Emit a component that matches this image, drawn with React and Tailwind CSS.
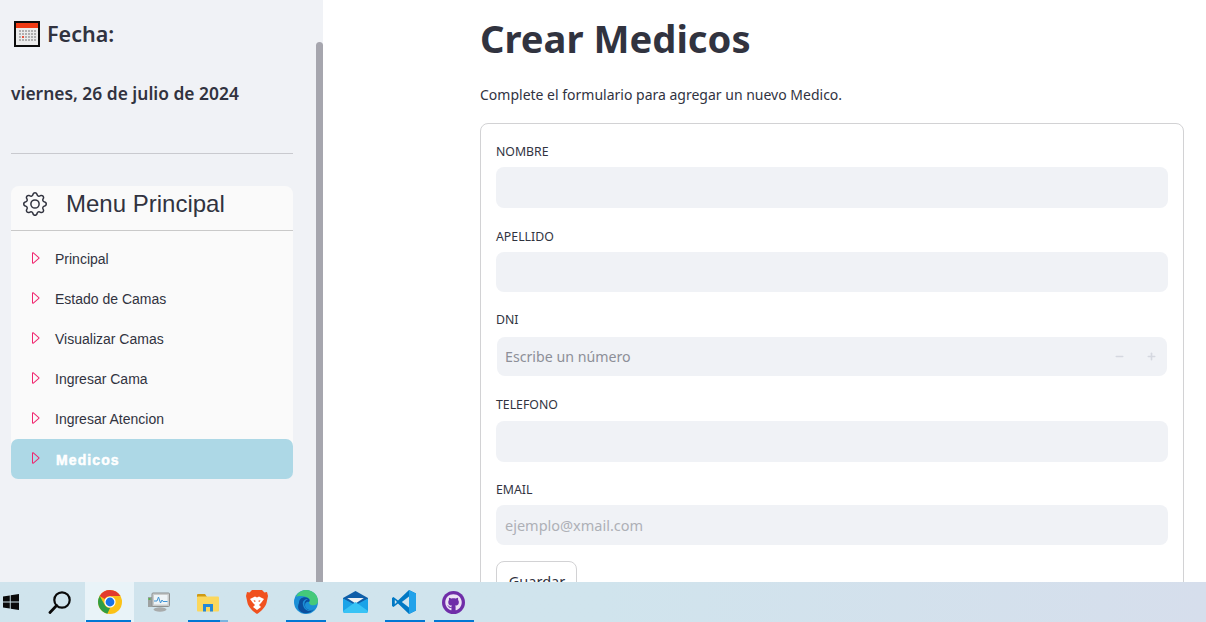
import { BsGear, BsCaretRight } from 'react-icons/bs';
import { FaGithub } from 'react-icons/fa';
import { Minus, Plus } from 'lucide-react';

const menuItems = ['Principal', 'Estado de Camas', 'Visualizar Camas', 'Ingresar Cama', 'Ingresar Atencion'];

const CalendarIcon = () => (
  <svg width="26" height="26" viewBox="0 0 26 26" className="shrink-0">
    <rect x="1" y="1" width="24" height="24" fill="#fff" stroke="#0c0c0c" strokeWidth="2" />
    <rect x="2" y="2" width="22" height="5" fill="#f03a14" />
    <rect x="2" y="7" width="22" height="17" fill="#ececec" />
    {[9, 12, 15, 18].map((y) => [6, 9, 12, 15, 18, 21].map((x) => (
      <rect key={`${x}-${y}`} x={x - 1} y={y} width="2" height="2" fill={x === 9 && y === 15 ? '#e8553f' : '#b0b0b0'} />
    )))}
  </svg>
);

const WindowsIcon = () => (
  <svg width="16" height="16" viewBox="0 0 16 16" fill="#0a0a0a">
    <path d="M0 2.4 6.8 1.4V7.6H0ZM7.7 1.3 16 0V7.6H7.7ZM0 8.4H6.8V14.6L0 13.6ZM7.7 8.4H16V16L7.7 14.7Z" />
  </svg>
);

const SearchIcon = () => (
  <svg width="24" height="24" viewBox="0 0 24 24" fill="none" stroke="#0a0a0a">
    <circle cx="14" cy="10" r="7.7" strokeWidth="2.2" />
    <path d="M8.6 15.6 2 22.4" strokeWidth="2.8" strokeLinecap="round" />
  </svg>
);

const ChromeIcon = () => (
  <svg width="24" height="24" viewBox="0 0 24 24" className="ml-[2px]">
    <circle cx="12" cy="12" r="12" fill="#fbc116" />
    <path d="M12 0A12 12 0 0 1 22.4 6H12A6 6 0 0 0 6.8 9L1.7 5.9A12 12 0 0 1 12 0Z" fill="#e33b2e" />
    <path d="M1.7 5.9 6.8 15A6 6 0 0 0 12 18L9.4 23.7A12 12 0 0 1 1.7 5.9Z" fill="#2f9e44" />
    <circle cx="12" cy="12" r="5.6" fill="#fff" />
    <circle cx="12" cy="12" r="4.4" fill="#1a73e8" />
  </svg>
);

const MonitorIcon = () => (
  <svg width="22" height="20" viewBox="0 0 22 20">
    <rect x="0" y="5" width="7" height="10" fill="#9da1a1" />
    <rect x="0.500" y="6" width="2" height="2" fill="#5bb04d" />
    <rect x="4" y="1" width="17.500" height="13.500" rx="1" fill="#c9cccc" stroke="#8d9191" />
    <rect x="6" y="3" width="13.500" height="9.500" fill="#eef4f7" />
    <path d="M6 9h3l1.500-4 2 6 1.500-3 1 1.500h4.500" fill="none" stroke="#3f94d6" />
    <ellipse cx="12" cy="17.500" rx="6.500" ry="2.200" fill="#a8abab" />
  </svg>
);

const FolderIcon = () => (
  <svg width="22" height="19" viewBox="0 0 22 19">
    <path d="M0 2a1 1 0 0 1 1-1h7l2 3H0Z" fill="#cf9a14" />
    <rect x="0" y="3.500" width="22" height="15" rx="1" fill="#fbd75c" />
    <path d="M6 18.500V11h10v7.500h-3V14H9v4.500Z" fill="#2488d8" />
  </svg>
);

const BraveIcon = () => (
  <svg width="22" height="24" viewBox="0 0 22 24">
    <path d="M6 0H16L18.500 2.500 21 2 22 6 20.500 13C19.500 17 15 21.500 11 24 7 21.500 2.500 17 1.500 13L0 6 1 2 3.500 2.500Z" fill="#f0511f" />
    <path d="M6 8 9 6.500 11 7.500 13 6.500 16 8 18 9 15 13 13 15 15 17 11 20 7 17 9 15 7 13 4 9Z" fill="#fff" />
    <path d="M7.500 10 10 11 8.500 12ZM14.500 10 12 11 13.500 12Z" fill="#f0511f" />
  </svg>
);

const EdgeIcon = () => (
  <svg width="24" height="24" viewBox="0 0 24 24">
    <circle cx="12" cy="12" r="12" fill="#1b8fd6" />
    <path d="M2 7C4 2 8 0 12 0 19 0 24 5 24 11 24 15 20 16 17 15 14.500 14 15 11 16 10 14 6 5 5 2 7Z" fill="#44c97a" />
    <path d="M5 13C5 8 10 6 14 8 16 9.500 16 11 15 12 12 11 10 14 11.500 17.500 13 20 17 21 20 19.500 16 24 9 25 5 20 3.500 18 4 15 5 13Z" fill="#0b4f9e" />
    <path d="M9 15C8 11 11 8.500 14 9 11.500 10 10 12 10.500 15 11 19 15 22 20 19.500 15 23 10 20 9 15Z" fill="#1b8fd6" />
  </svg>
);

const MailIcon = () => (
  <svg width="25" height="22" viewBox="0 0 24 22" preserveAspectRatio="none">
    <path d="M0 7 12 0 24 7V8L12 15 0 8Z" fill="#0f5ea8" />
    <path d="M4 7H20L12 12.500Z" fill="#f2f2f2" />
    <path d="M0 7.500 12 14 24 7.500V20A2 2 0 0 1 22 22H2A2 2 0 0 1 0 20Z" fill="#1aa3e8" />
    <path d="M0 20 12 11 24 20V20A2 2 0 0 1 22 22H2A2 2 0 0 1 0 20Z" fill="#38c3f5" />
  </svg>
);

const VsCodeIcon = () => (
  <svg width="24" height="24" viewBox="0 0 24 24" className="-ml-[2px]">
    <path d="M17 0 24 3.500V20.500L17 24 6 13.500 1.500 17 0 16V8L1.500 7 6 10.500Z" fill="#0078c4" />
    <path d="M17 0 24 3.500V20.500L17 24Z" fill="#22a2ea" />
    <path d="M17 6.500 9.800 12 17 17.500Z" fill="#d0e4ed" />
    <path d="M2.800 9.800 5 12 2.800 14.200Z" fill="#d0e4ed" />
  </svg>
);

const GithubIcon = () => (
  <span className="flex h-[23px] w-[23px] items-center justify-center rounded-full bg-[#6f2da8]">
    <FaGithub className="text-[#ece2f5]" size={17} />
  </span>
);

const taskbarItems = [
  { id: 'windows', icon: <WindowsIcon /> },
  { id: 'search', icon: <SearchIcon /> },
  { id: 'chrome', icon: <ChromeIcon />, active: true },
  { id: 'monitor', icon: <MonitorIcon /> },
  { id: 'folder', icon: <FolderIcon />, underline: 'folder' },
  { id: 'brave', icon: <BraveIcon /> },
  { id: 'edge', icon: <EdgeIcon />, underline: 'app' },
  { id: 'mail', icon: <MailIcon /> },
  { id: 'vscode', icon: <VsCodeIcon />, underline: 'app' },
  { id: 'github', icon: <GithubIcon />, underline: 'app' }
];

const Field = ({ label, placeholder, className = '', labelClass = 'h-[25px]' }) => (
  <div className={className}>
    <label className={`block text-[12.300px] leading-[20px] text-[#31333f] ${labelClass}`}>{label}</label>
    <input
      placeholder={placeholder}
      className="block h-[40.500px] w-full rounded-lg bg-[#f0f2f6] px-[9px] text-[14.500px] text-[#31333f] outline-none placeholder:text-[#aeb0b6]"
    />
  </div>
);

export default function App() {
  return (
    <div className="flex h-[622px] w-[1206px] flex-col overflow-hidden bg-white font-['Noto_Sans',sans-serif] text-[#31333f]">
      <div className="flex h-[582px] min-h-0">
        <aside className="relative flex w-[323px] shrink-0 flex-col bg-[#f0f2f6] pl-[11px] pr-[30px]">
          <div className="mt-[21px] flex h-[26px] items-center gap-[7px] pl-[3px]">
            <CalendarIcon />
            <span className="text-[21.500px] font-semibold leading-[26px]">Fecha:</span>
          </div>
          <p className="mt-[31px] text-[17.400px] font-semibold leading-[30px]">viernes, 26 de julio de 2024</p>
          <hr className="mt-[45px] border-t border-[#c9cacf]" />
          <nav className="mt-[32px] rounded-lg bg-[#fafafa] font-['Liberation_Sans',sans-serif]">
            <div className="flex h-[45px] items-center gap-[19px] border-b border-[#c9c9c9] pb-[8px] pl-[12px]">
              <BsGear size={24} />
              <span className="text-[24px] leading-[30px]">Menu Principal</span>
            </div>
            <ul className="mt-[8px]">
              {menuItems.map((item) => (
                <li key={item} className="flex h-[40px] items-center pl-[16px] text-[14px]">
                  <BsCaretRight size={16} className="-mt-[2px] text-[#f0256e]" />
                  <span className="ml-[12px]">{item}</span>
                </li>
              ))}
              <li className="flex h-[40px] items-center rounded-[7px] bg-[#add8e6] pl-[16px] text-[14px] font-bold text-white">
                <BsCaretRight size={16} className="-mt-[2px] text-[#f0256e]" />
                <span className="ml-[13px] pt-[2px] tracking-[1.100px] [-webkit-text-stroke:0.5px_white]">Medicos</span>
              </li>
            </ul>
          </nav>
          <div className="absolute bottom-0 right-0 top-[42px] w-[7px] rounded-t-full bg-[#a6a6ae]" />
        </aside>

        <main className="min-w-0 flex-1 overflow-hidden pl-[157px] pr-[22px]">
          <h1 className="mt-[10px] text-[38.200px] font-bold leading-[56px]">Crear Medicos</h1>
          <p className="mt-[16px] text-[14px] leading-[26px]">Complete el formulario para agregar un nuevo Medico.</p>
          <form className="mt-[15px] rounded-lg border border-[#d2d2d4] px-[15px] pb-[20px] pt-[18px]">
            <Field label="NOMBRE" />
            <Field label="APELLIDO" className="mt-[19px]" />
            <div className="mt-[18px]">
              <label className="block h-[27px] text-[12.300px] leading-[20px]">DNI</label>
              <div className="mx-[1px] flex h-[39px] items-center rounded-lg bg-[#f0f2f6] pl-[8px] pr-[10px]">
                <input placeholder="Escribe un número" className="min-w-0 flex-1 bg-transparent text-[14.200px] outline-none placeholder:text-[#8d8f98]" />
                <Minus size={11} strokeWidth={3.5} className="text-[#d5d8e0]" />
                <Plus size={11} strokeWidth={3.5} className="ml-[21px] text-[#d5d8e0]" />
              </div>
            </div>
            <Field label="TELEFONO" className="mt-[19px]" labelClass="h-[26px]" />
            <Field label="EMAIL" className="mt-[18px]" placeholder="ejemplo@xmail.com" />
            <button type="button" className="mt-[16px] h-[41px] w-[81px] rounded-lg border border-[#d2d2d4] bg-white pl-[1px] text-[14.500px]">Guardar</button>
          </form>
        </main>
      </div>

      <footer className="flex h-[40px] shrink-0 bg-gradient-to-r from-[#d0e4ed] via-[#d0e4ed] to-[#d6deec]">
        <div className="-ml-[13.600px] flex">
          {taskbarItems.map((item) => (
            <div key={item.id} className={`relative flex h-[40px] w-[49.200px] items-center justify-center ${item.active ? 'bg-[#e9f3f8]' : ''}`}>
              {item.icon}
              {item.active && <span className="absolute bottom-0 left-[1px] h-[2px] w-[45px] bg-[#0078d4]" />}
              {item.underline === 'app' && <span className="absolute bottom-0 left-[4.600px] h-[2px] w-[40px] bg-[#0078d4]" />}
              {item.underline === 'folder' && <span className="absolute bottom-0 left-[5px] h-[2px] w-[40px] bg-[#7ab5e0]"><span className="block h-full w-[32px] bg-[#0078d4]" /></span>}
            </div>
          ))}
        </div>
      </footer>
    </div>
  );
}
